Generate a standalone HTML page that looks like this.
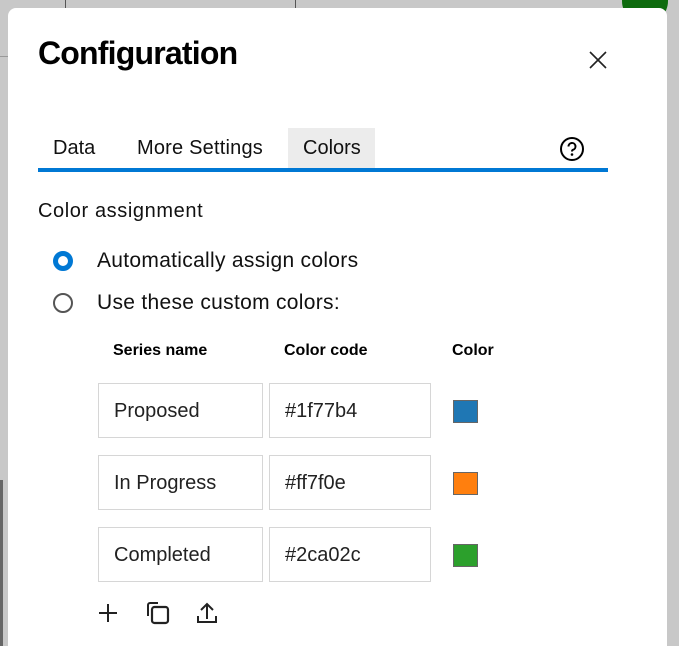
<!DOCTYPE html>
<html style="overflow:hidden"><head><style>
html,body{overflow:hidden}
body{margin:0;width:679px;height:646px;background:#c8c8c8;position:relative;overflow:hidden;font-family:"Liberation Sans",sans-serif;color:#000}
.abs{position:absolute}
.dlg{left:8px;top:8px;width:659px;height:638px;background:#fff;border-radius:8px 8px 0 0}
.tab{position:absolute;top:128px;height:40px;line-height:40px;font-size:20px;color:#111}
.inp{position:absolute;height:55px;border:1px solid #d6d6d6;box-sizing:border-box;font-size:20px;line-height:55px;padding-left:15px;color:#222}
.sw{position:absolute;left:453px;width:25px;height:23px;border:1px solid #666;box-sizing:border-box}
.hd{position:absolute;top:342px;font-size:16px;font-weight:bold}
</style></head><body>
<div class="abs" style="left:65px;top:0;width:1px;height:10px;background:#555"></div>
<div class="abs" style="left:295px;top:0;width:1px;height:10px;background:#555"></div>
<div class="abs" style="left:0;top:56px;width:8px;height:1px;background:#999"></div>
<div class="abs" style="left:0;top:480px;width:3px;height:166px;background:#666"></div>
<div class="abs" style="left:622px;top:-22px;width:46px;height:46px;border-radius:50%;background:#0e6b0e"></div>
<div class="abs dlg"></div>
<div class="abs" style="left:38px;top:35px;font-size:32px;font-weight:bold;letter-spacing:-0.8px">Configuration</div>
<svg class="abs" style="left:588px;top:50px" width="20" height="20" viewBox="0 0 20 20"><path d="M2 2L18 18M18 2L2 18" stroke="#222" stroke-width="1.6"/></svg>
<div class="abs" style="left:288px;top:128px;width:87px;height:40px;background:#ececec"></div>
<div class="tab" style="left:53px">Data</div>
<div class="tab" style="left:137px;letter-spacing:0.2px">More Settings</div>
<div class="tab" style="left:303px">Colors</div>
<svg class="abs" style="left:559px;top:136px" width="26" height="26" viewBox="0 0 26 26"><circle cx="13" cy="13" r="11" fill="none" stroke="#000" stroke-width="2"/><path d="M9.5 10.5a3.5 3.5 0 1 1 4.5 3.3c-.8.3-1 .8-1 1.7" fill="none" stroke="#000" stroke-width="2"/><circle cx="13" cy="18.5" r="1.3"/></svg>
<div class="abs" style="left:38px;top:168px;width:570px;height:4px;background:#0078d4"></div>
<div class="abs" style="left:38px;top:200px;font-size:20px;color:#111;letter-spacing:0.6px">Color assignment</div>
<div class="abs" style="left:53px;top:251px;width:20px;height:20px;border-radius:50%;border:5px solid #0078d4;box-sizing:border-box"></div>
<div class="abs" style="left:53px;top:293px;width:20px;height:20px;border-radius:50%;border:2.5px solid #555;box-sizing:border-box"></div>
<div class="abs" style="left:97px;top:249px;font-size:21px;color:#111;letter-spacing:0.3px">Automatically assign colors</div>
<div class="abs" style="left:97px;top:291px;font-size:21px;color:#111;letter-spacing:0.3px">Use these custom colors:</div>
<div class="hd" style="left:113px">Series name</div>
<div class="hd" style="left:284px">Color code</div>
<div class="hd" style="left:452px">Color</div>
<div class="inp" style="left:98px;top:383px;width:165px">Proposed</div>
<div class="inp" style="left:269px;top:383px;width:162px">#1f77b4</div>
<div class="sw" style="top:400px;background:#1f77b4"></div>
<div class="inp" style="left:98px;top:455px;width:165px">In Progress</div>
<div class="inp" style="left:269px;top:455px;width:162px">#ff7f0e</div>
<div class="sw" style="top:472px;background:#ff7f0e"></div>
<div class="inp" style="left:98px;top:527px;width:165px">Completed</div>
<div class="inp" style="left:269px;top:527px;width:162px">#2ca02c</div>
<div class="sw" style="top:544px;background:#2ca02c"></div>
<svg class="abs" style="left:96px;top:600px" width="130" height="26" viewBox="0 0 130 26">
<path d="M12 4V22M3 13H21" stroke="#222" stroke-width="2"/>
<path d="M52 16V5a2 2 0 0 1 2-2h8" fill="none" stroke="#222" stroke-width="2"/>
<rect x="56" y="7" width="16" height="16" rx="2.5" fill="none" stroke="#222" stroke-width="2.2"/>
<path d="M111 19V4M105 10l6-6 6 6M102 16v6h18v-6" fill="none" stroke="#222" stroke-width="2"/>
</svg>
</body></html>
